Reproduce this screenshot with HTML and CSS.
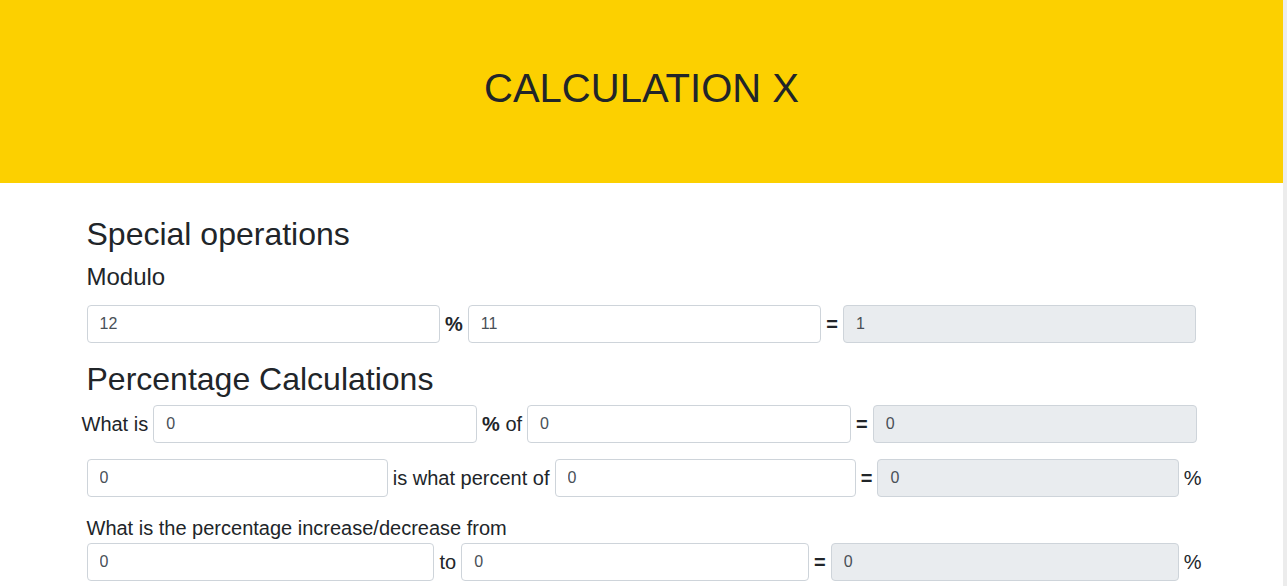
FILE: index.html
```html
<!DOCTYPE html>
<html lang="en">
<head>
<meta charset="utf-8">
<title>Calculation X</title>
<link rel="stylesheet" href="styles.css">
</head>
<body>
<header class="banner">
  <h1 class="banner-title">CALCULATION X</h1>
</header>
<main class="container">
  <h2 class="section-title section-title-first">Special operations</h2>
  <h4 class="sub-title">Modulo</h4>
  <div class="calc-row calc-row-modulo">
    <input class="field" type="text" value="12">
    <span class="op op-bold">%</span>
    <input class="field" type="text" value="11">
    <span class="op op-bold">=</span>
    <input class="field field-result" type="text" value="1" disabled>
  </div>

  <h2 class="section-title">Percentage Calculations</h2>
  <div class="calc-row calc-row-left">
    <span class="op">What is</span>
    <input class="field" type="text" value="0">
    <span class="op"><b>%</b> of</span>
    <input class="field" type="text" value="0">
    <span class="op op-bold">=</span>
    <input class="field field-result" type="text" value="0" disabled>
  </div>
  <div class="calc-row calc-row-right">
    <input class="field" type="text" value="0">
    <span class="op">is what percent of</span>
    <input class="field" type="text" value="0">
    <span class="op op-bold">=</span>
    <input class="field field-result" type="text" value="0" disabled>
    <span class="op">%</span>
  </div>
  <p class="question">What is the percentage increase/decrease from</p>
  <div class="calc-row calc-row-right">
    <input class="field" type="text" value="0">
    <span class="op">to</span>
    <input class="field" type="text" value="0">
    <span class="op op-bold">=</span>
    <input class="field field-result" type="text" value="0" disabled>
    <span class="op">%</span>
  </div>
</main>
</body>
</html>
```
FILE: styles.css
```css
* {
  box-sizing: border-box;
}

html {
  margin: 0;
  padding: 0;
  background: #ececec;
}

body {
  margin: 0 4px 0 0;
  padding: 0;
  min-height: 100vh;
  font-family: "Liberation Sans", Arial, sans-serif;
  font-size: 16px;
  line-height: 1.5;
  color: #212529;
  background: #ffffff;
}

.banner {
  background: #fcd000;
  padding: 64px 0 71px;
  text-align: center;
}

.banner-title {
  margin: 0;
  font-size: 40px;
  font-weight: 400;
  line-height: 1.2;
  color: #212529;
}

.container {
  max-width: 1140px;
  margin: 0 auto;
  padding: 0 15px 16px;
}

.section-title {
  margin: 17px 0 6px;
  font-size: 32px;
  font-weight: 400;
  line-height: 1.2;
}

.section-title-first {
  margin-top: 32px;
  margin-bottom: 10px;
}

.sub-title {
  margin: 0 0 13px;
  font-size: 24px;
  font-weight: 400;
  line-height: 1.2;
}

.calc-row {
  display: flex;
  align-items: center;
  margin-bottom: 16px;
}

.calc-row-modulo {
  margin-bottom: 0;
}

.calc-row-left {
  margin-left: -10px;
}

.calc-row-right {
  margin-right: -10px;
}

.op {
  flex: none;
  margin: 0 5px;
  font-size: 20px;
  line-height: 30px;
  white-space: nowrap;
}

.op-bold,
.op b {
  font-weight: 700;
}

.field {
  flex: 1 1 0;
  min-width: 0;
  height: 38px;
  padding: 6px 12px;
  font-family: inherit;
  font-size: 16px;
  line-height: 1.5;
  color: #495057;
  background: #ffffff;
  border: 1px solid #ced4da;
  border-radius: 4px;
  outline: none;
}

.field-result {
  background: #e9ecef;
  color: #495057;
  opacity: 1;
}

.question {
  margin: 0;
  font-size: 20px;
  line-height: 30px;
}
```
